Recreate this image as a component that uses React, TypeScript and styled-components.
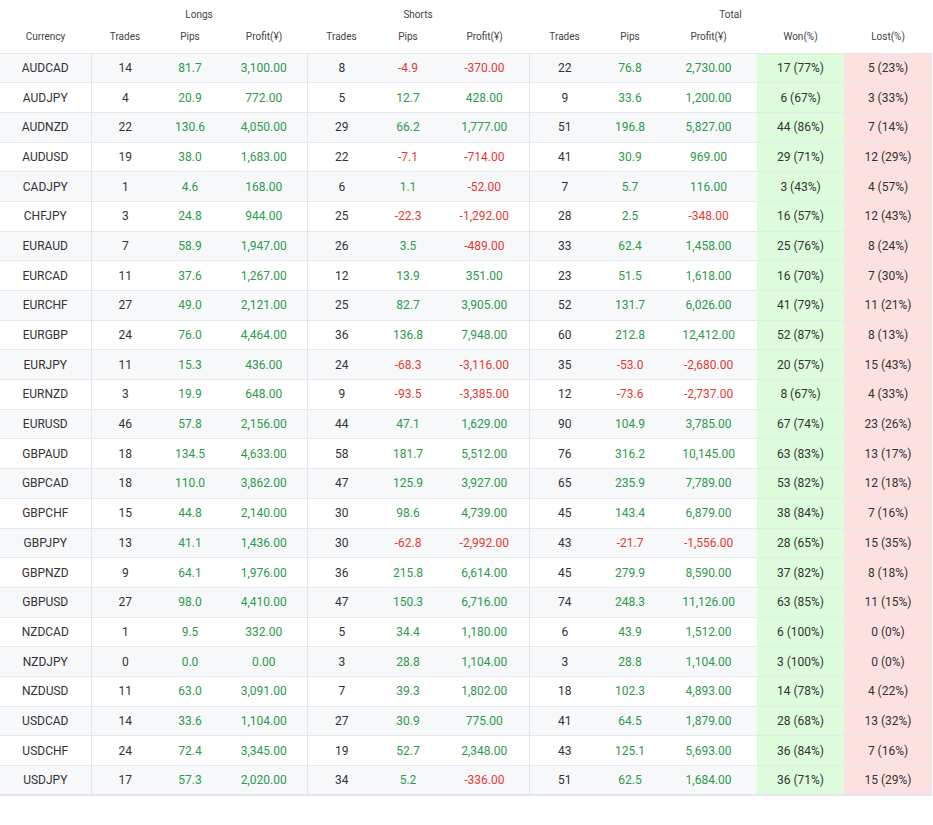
import * as React from "react"
import styled, { createGlobalStyle } from "styled-components"

const GlobalStyle = createGlobalStyle`
  body { margin: 0; background: #fff; font-family: Roboto, "Liberation Sans", sans-serif; }
`

type Row = [string, number, string, string, number, string, string, number, string, string, string, string]

const rows: Row[] = [
  ["AUDCAD", 14, "81.7", "3,100.00", 8, "-4.9", "-370.00", 22, "76.8", "2,730.00", "17 (77%)", "5 (23%)"],
  ["AUDJPY", 4, "20.9", "772.00", 5, "12.7", "428.00", 9, "33.6", "1,200.00", "6 (67%)", "3 (33%)"],
  ["AUDNZD", 22, "130.6", "4,050.00", 29, "66.2", "1,777.00", 51, "196.8", "5,827.00", "44 (86%)", "7 (14%)"],
  ["AUDUSD", 19, "38.0", "1,683.00", 22, "-7.1", "-714.00", 41, "30.9", "969.00", "29 (71%)", "12 (29%)"],
  ["CADJPY", 1, "4.6", "168.00", 6, "1.1", "-52.00", 7, "5.7", "116.00", "3 (43%)", "4 (57%)"],
  ["CHFJPY", 3, "24.8", "944.00", 25, "-22.3", "-1,292.00", 28, "2.5", "-348.00", "16 (57%)", "12 (43%)"],
  ["EURAUD", 7, "58.9", "1,947.00", 26, "3.5", "-489.00", 33, "62.4", "1,458.00", "25 (76%)", "8 (24%)"],
  ["EURCAD", 11, "37.6", "1,267.00", 12, "13.9", "351.00", 23, "51.5", "1,618.00", "16 (70%)", "7 (30%)"],
  ["EURCHF", 27, "49.0", "2,121.00", 25, "82.7", "3,905.00", 52, "131.7", "6,026.00", "41 (79%)", "11 (21%)"],
  ["EURGBP", 24, "76.0", "4,464.00", 36, "136.8", "7,948.00", 60, "212.8", "12,412.00", "52 (87%)", "8 (13%)"],
  ["EURJPY", 11, "15.3", "436.00", 24, "-68.3", "-3,116.00", 35, "-53.0", "-2,680.00", "20 (57%)", "15 (43%)"],
  ["EURNZD", 3, "19.9", "648.00", 9, "-93.5", "-3,385.00", 12, "-73.6", "-2,737.00", "8 (67%)", "4 (33%)"],
  ["EURUSD", 46, "57.8", "2,156.00", 44, "47.1", "1,629.00", 90, "104.9", "3,785.00", "67 (74%)", "23 (26%)"],
  ["GBPAUD", 18, "134.5", "4,633.00", 58, "181.7", "5,512.00", 76, "316.2", "10,145.00", "63 (83%)", "13 (17%)"],
  ["GBPCAD", 18, "110.0", "3,862.00", 47, "125.9", "3,927.00", 65, "235.9", "7,789.00", "53 (82%)", "12 (18%)"],
  ["GBPCHF", 15, "44.8", "2,140.00", 30, "98.6", "4,739.00", 45, "143.4", "6,879.00", "38 (84%)", "7 (16%)"],
  ["GBPJPY", 13, "41.1", "1,436.00", 30, "-62.8", "-2,992.00", 43, "-21.7", "-1,556.00", "28 (65%)", "15 (35%)"],
  ["GBPNZD", 9, "64.1", "1,976.00", 36, "215.8", "6,614.00", 45, "279.9", "8,590.00", "37 (82%)", "8 (18%)"],
  ["GBPUSD", 27, "98.0", "4,410.00", 47, "150.3", "6,716.00", 74, "248.3", "11,126.00", "63 (85%)", "11 (15%)"],
  ["NZDCAD", 1, "9.5", "332.00", 5, "34.4", "1,180.00", 6, "43.9", "1,512.00", "6 (100%)", "0 (0%)"],
  ["NZDJPY", 0, "0.0", "0.00", 3, "28.8", "1,104.00", 3, "28.8", "1,104.00", "3 (100%)", "0 (0%)"],
  ["NZDUSD", 11, "63.0", "3,091.00", 7, "39.3", "1,802.00", 18, "102.3", "4,893.00", "14 (78%)", "4 (22%)"],
  ["USDCAD", 14, "33.6", "1,104.00", 27, "30.9", "775.00", 41, "64.5", "1,879.00", "28 (68%)", "13 (32%)"],
  ["USDCHF", 24, "72.4", "3,345.00", 19, "52.7", "2,348.00", 43, "125.1", "5,693.00", "36 (84%)", "7 (16%)"],
  ["USDJPY", 17, "57.3", "2,020.00", 34, "5.2", "-336.00", 51, "62.5", "1,684.00", "36 (71%)", "15 (29%)"],
]

const widths = [91, 68, 62, 86, 69, 64, 89, 71, 60, 97, 87, 88]
const groupEnds = new Set([0, 3, 6])

const Table = styled.table`
  width: 932px;
  table-layout: fixed;
  border-collapse: collapse;
  border-bottom: 2px solid #e3e6ea;
  font-size: 12px;
  color: #333;
`

const GroupHead = styled.th`
  height: 24px;
  padding: 4px 0 0;
  box-sizing: border-box;
  font-size: 10px;
  font-weight: 400;
  color: #444;
  text-align: center;
  vertical-align: middle;
`

const ColHead = styled.th`
  height: 29px;
  padding: 0 0 4px;
  box-sizing: border-box;
  font-size: 10px;
  font-weight: 400;
  color: #444;
  text-align: center;
  vertical-align: middle;
  border-bottom: 1px solid #e3e6ea;
`

const Tr = styled.tr<{ $alt: boolean }>`
  background: ${(p) => (p.$alt ? "#f6f8fa" : "#fff")};
  border-bottom: 1px solid #e6e9ec;
`

const Td = styled.td<{ $tone?: "pos" | "neg"; $bg?: string; $sep?: boolean }>`
  height: 29.7px;
  padding: 0;
  box-sizing: border-box;
  text-align: center;
  color: ${(p) => (p.$tone === "pos" ? "#2c9a4c" : p.$tone === "neg" ? "#e53935" : "#333")};
  background: ${(p) => p.$bg || "transparent"};
  border-right: ${(p) => (p.$sep ? "1px solid #e3e6ea" : "none")};
`

const tone = (v: string) => (v.startsWith("-") ? "neg" : "pos")

export default function App() {
  return (
    <>
      <GlobalStyle />
      <Table>
        <colgroup>
          {widths.map((w, i) => (
            <col key={i} style={{ width: w }} />
          ))}
        </colgroup>
        <thead>
          <tr>
            <GroupHead />
            <GroupHead colSpan={3}>Longs</GroupHead>
            <GroupHead colSpan={3}>Shorts</GroupHead>
            <GroupHead colSpan={5}>Total</GroupHead>
          </tr>
          <tr>
            {["Currency", "Trades", "Pips", "Profit(¥)", "Trades", "Pips", "Profit(¥)", "Trades", "Pips", "Profit(¥)", "Won(%)", "Lost(%)"].map((h, i) => (
              <ColHead key={i}>{h}</ColHead>
            ))}
          </tr>
        </thead>
        <tbody>
          {rows.map((r, ri) => (
            <Tr key={r[0]} $alt={ri % 2 === 0}>
              {r.map((c, i) => {
                const s = String(c)
                const numeric = [2, 3, 5, 6, 8, 9].includes(i)
                return (
                  <Td
                    key={i}
                    $sep={groupEnds.has(i)}
                    $tone={numeric ? tone(s) : undefined}
                    $bg={i === 10 ? "#dcfcdc" : i === 11 ? "#fde0e0" : undefined}
                  >
                    {s}
                  </Td>
                )
              })}
            </Tr>
          ))}
        </tbody>
      </Table>
    </>
  )
}
